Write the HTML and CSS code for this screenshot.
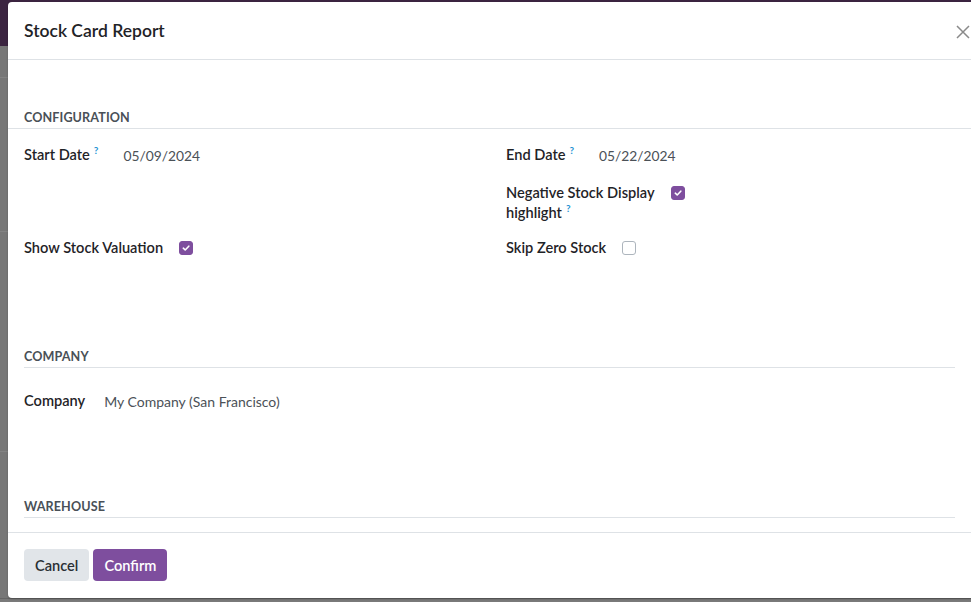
FILE: index.html
```html
<!DOCTYPE html>
<html lang="en">
<head>
<meta charset="utf-8">
<title>Stock Card Report</title>
<link rel="stylesheet" href="styles.css">
</head>
<body>
<div class="app">
  <div class="navbar"></div>
  <div class="app-rule rule-1"></div>
  <div class="app-rule rule-2"></div>
  <div class="app-rule rule-3"></div>
  <div class="app-bottom"></div>
</div>

<div class="modal">
  <header class="modal-header">
    <h4 class="modal-title">Stock Card Report</h4>
    <button class="btn-close" aria-label="Close">
      <svg width="14" height="14" viewBox="0 0 14 14"><path d="M1 1L13 13M13 1L1 13" stroke="#8a8a8a" stroke-width="1.5" fill="none"/></svg>
    </button>
  </header>

  <div class="modal-body">
    <div class="sep sep-wide">Configuration</div>
    <div class="config-grid">
      <div class="field">
        <label class="lbl">Start Date<sup class="help">?</sup></label>
        <span class="val">05/09/2024</span>
      </div>
      <div class="field">
        <label class="lbl">End Date<sup class="help">?</sup></label>
        <span class="val">05/22/2024</span>
      </div>
      <div class="field"></div>
      <div class="field">
        <label class="lbl">Negative Stock Display<br>highlight<sup class="help">?</sup></label>
        <span class="cb checked"><svg width="10" height="10" viewBox="0 0 10 10"><path d="M2.3 5.2L4.2 7L7.8 3.2" stroke="#fff" stroke-width="1.6" fill="none" stroke-linecap="round" stroke-linejoin="round"/></svg></span>
      </div>
      <div class="field">
        <label class="lbl">Show Stock Valuation</label>
        <span class="cb checked"><svg width="10" height="10" viewBox="0 0 10 10"><path d="M2.3 5.2L4.2 7L7.8 3.2" stroke="#fff" stroke-width="1.6" fill="none" stroke-linecap="round" stroke-linejoin="round"/></svg></span>
      </div>
      <div class="field">
        <label class="lbl">Skip Zero Stock</label>
        <span class="cb"></span>
      </div>
    </div>

    <div class="sep sep-company">Company</div>
    <div class="field field-company">
      <label class="lbl">Company</label>
      <span class="val">My Company (San Francisco)</span>
    </div>

    <div class="sep sep-warehouse">Warehouse</div>
  </div>

  <footer class="modal-footer">
    <button class="btn btn-secondary">Cancel</button>
    <button class="btn btn-primary">Confirm</button>
  </footer>
</div>
</body>
</html>
```

FILE: styles.css
```css
* { box-sizing: border-box; }

html, body {
  margin: 0;
  padding: 0;
}

body {
  width: 971px;
  height: 602px;
  overflow: hidden;
  position: relative;
  background: #777777;
  font-family: Lato, "Noto Sans", sans-serif;
  font-size: 14px;
  color: #212529;
}

.app {
  height: 602px;
  position: relative;
}

.navbar {
  height: 46px;
  background: #3b2440;
}

.app-rule {
  height: 1px;
  background: #838383;
  margin-top: 31px;
}
.rule-2 { margin-top: 153px; }
.rule-3 { margin-top: 219px; }

.app-bottom {
  position: absolute;
  left: 0;
  right: 0;
  bottom: 0;
  height: 4px;
  background: #7a7a7a;
  border-top: 1px solid #666;
}

.modal {
  position: absolute;
  left: 8px;
  top: 2px;
  width: 963px;
  height: 596px;
  background: #ffffff;
  border-radius: 4px 0 0 4px;
  display: flex;
  flex-direction: column;
  box-shadow: 0 1px 2px rgba(0,0,0,0.25);
}

.modal-header {
  height: 58px;
  flex: none;
  border-bottom: 1px solid #dee2e6;
  display: flex;
  align-items: center;
  justify-content: space-between;
  padding: 0 1px 0 16px;
}

.modal-title {
  margin: 0;
  font-size: 17.5px;
  font-weight: 600;
  color: #1f2327;
}

.btn-close {
  border: 0;
  background: none;
  padding: 0;
  width: 14px;
  height: 14px;
  display: flex;
  margin-top: 2px;
}

.modal-body {
  height: 472px;
  flex: none;
  overflow: hidden;
  padding: 47px 16px 0;
}

.sep {
  font-size: 12.6px;
  font-weight: 700;
  text-transform: uppercase;
  color: #495057;
  line-height: 18px;
  padding-top: 2px;
  padding-bottom: 1px;
  border-bottom: 1px solid #dee2e6;
  letter-spacing: 0.1px;
}

.sep-wide {
  margin-left: -16px;
  margin-right: -16px;
  padding-left: 16px;
}

.config-grid {
  margin-top: 16px;
  display: grid;
  grid-template-columns: 482px 1fr;
  grid-template-rows: 38px 55px 20px;
  align-items: start;
}

.field {
  display: flex;
  align-items: flex-start;
  gap: 16px;
  line-height: 20px;
}

.lbl {
  font-size: 14.6px;
  font-weight: 600;
  color: #1f2327;
}

.help {
  color: #1f93d3;
  font-size: 10px;
  font-weight: 700;
  margin-left: 4px;
  vertical-align: 6px;
  line-height: 0;
}

.val {
  color: #4b5157;
  padding-left: 9px;
  margin-top: 1px;
  font-size: 13.8px;
}

.cb {
  width: 14px;
  height: 14px;
  margin-top: 3px;
  border: 1px solid #adb5bd;
  border-radius: 3px;
  background: #fff;
  display: flex;
  align-items: center;
  justify-content: center;
  flex: none;
}

.cb.checked {
  background: #7e4e9e;
  border-color: #7e4e9e;
}

.sep-company {
  margin-top: 88px;
}

.field-company {
  margin-top: 23px;
}
.field-company .val { padding-left: 3px; font-size: 14px; }

.sep-warehouse {
  margin-top: 84px;
}

.modal-footer {
  flex: 1;
  border-top: 1px solid #dee2e6;
  padding: 16px 16px 0;
  display: flex;
  align-items: flex-start;
  gap: 4px;
}

.btn {
  height: 32px;
  border: 0;
  border-radius: 4px;
  padding: 0 11px;
  font-family: inherit;
  font-size: 14.6px;
  font-weight: 600;
}

.btn-secondary {
  background: #e1e5e9;
  color: #2a2f34;
}

.btn-primary {
  background: #7e4e9e;
  color: #ffffff;
}
```
